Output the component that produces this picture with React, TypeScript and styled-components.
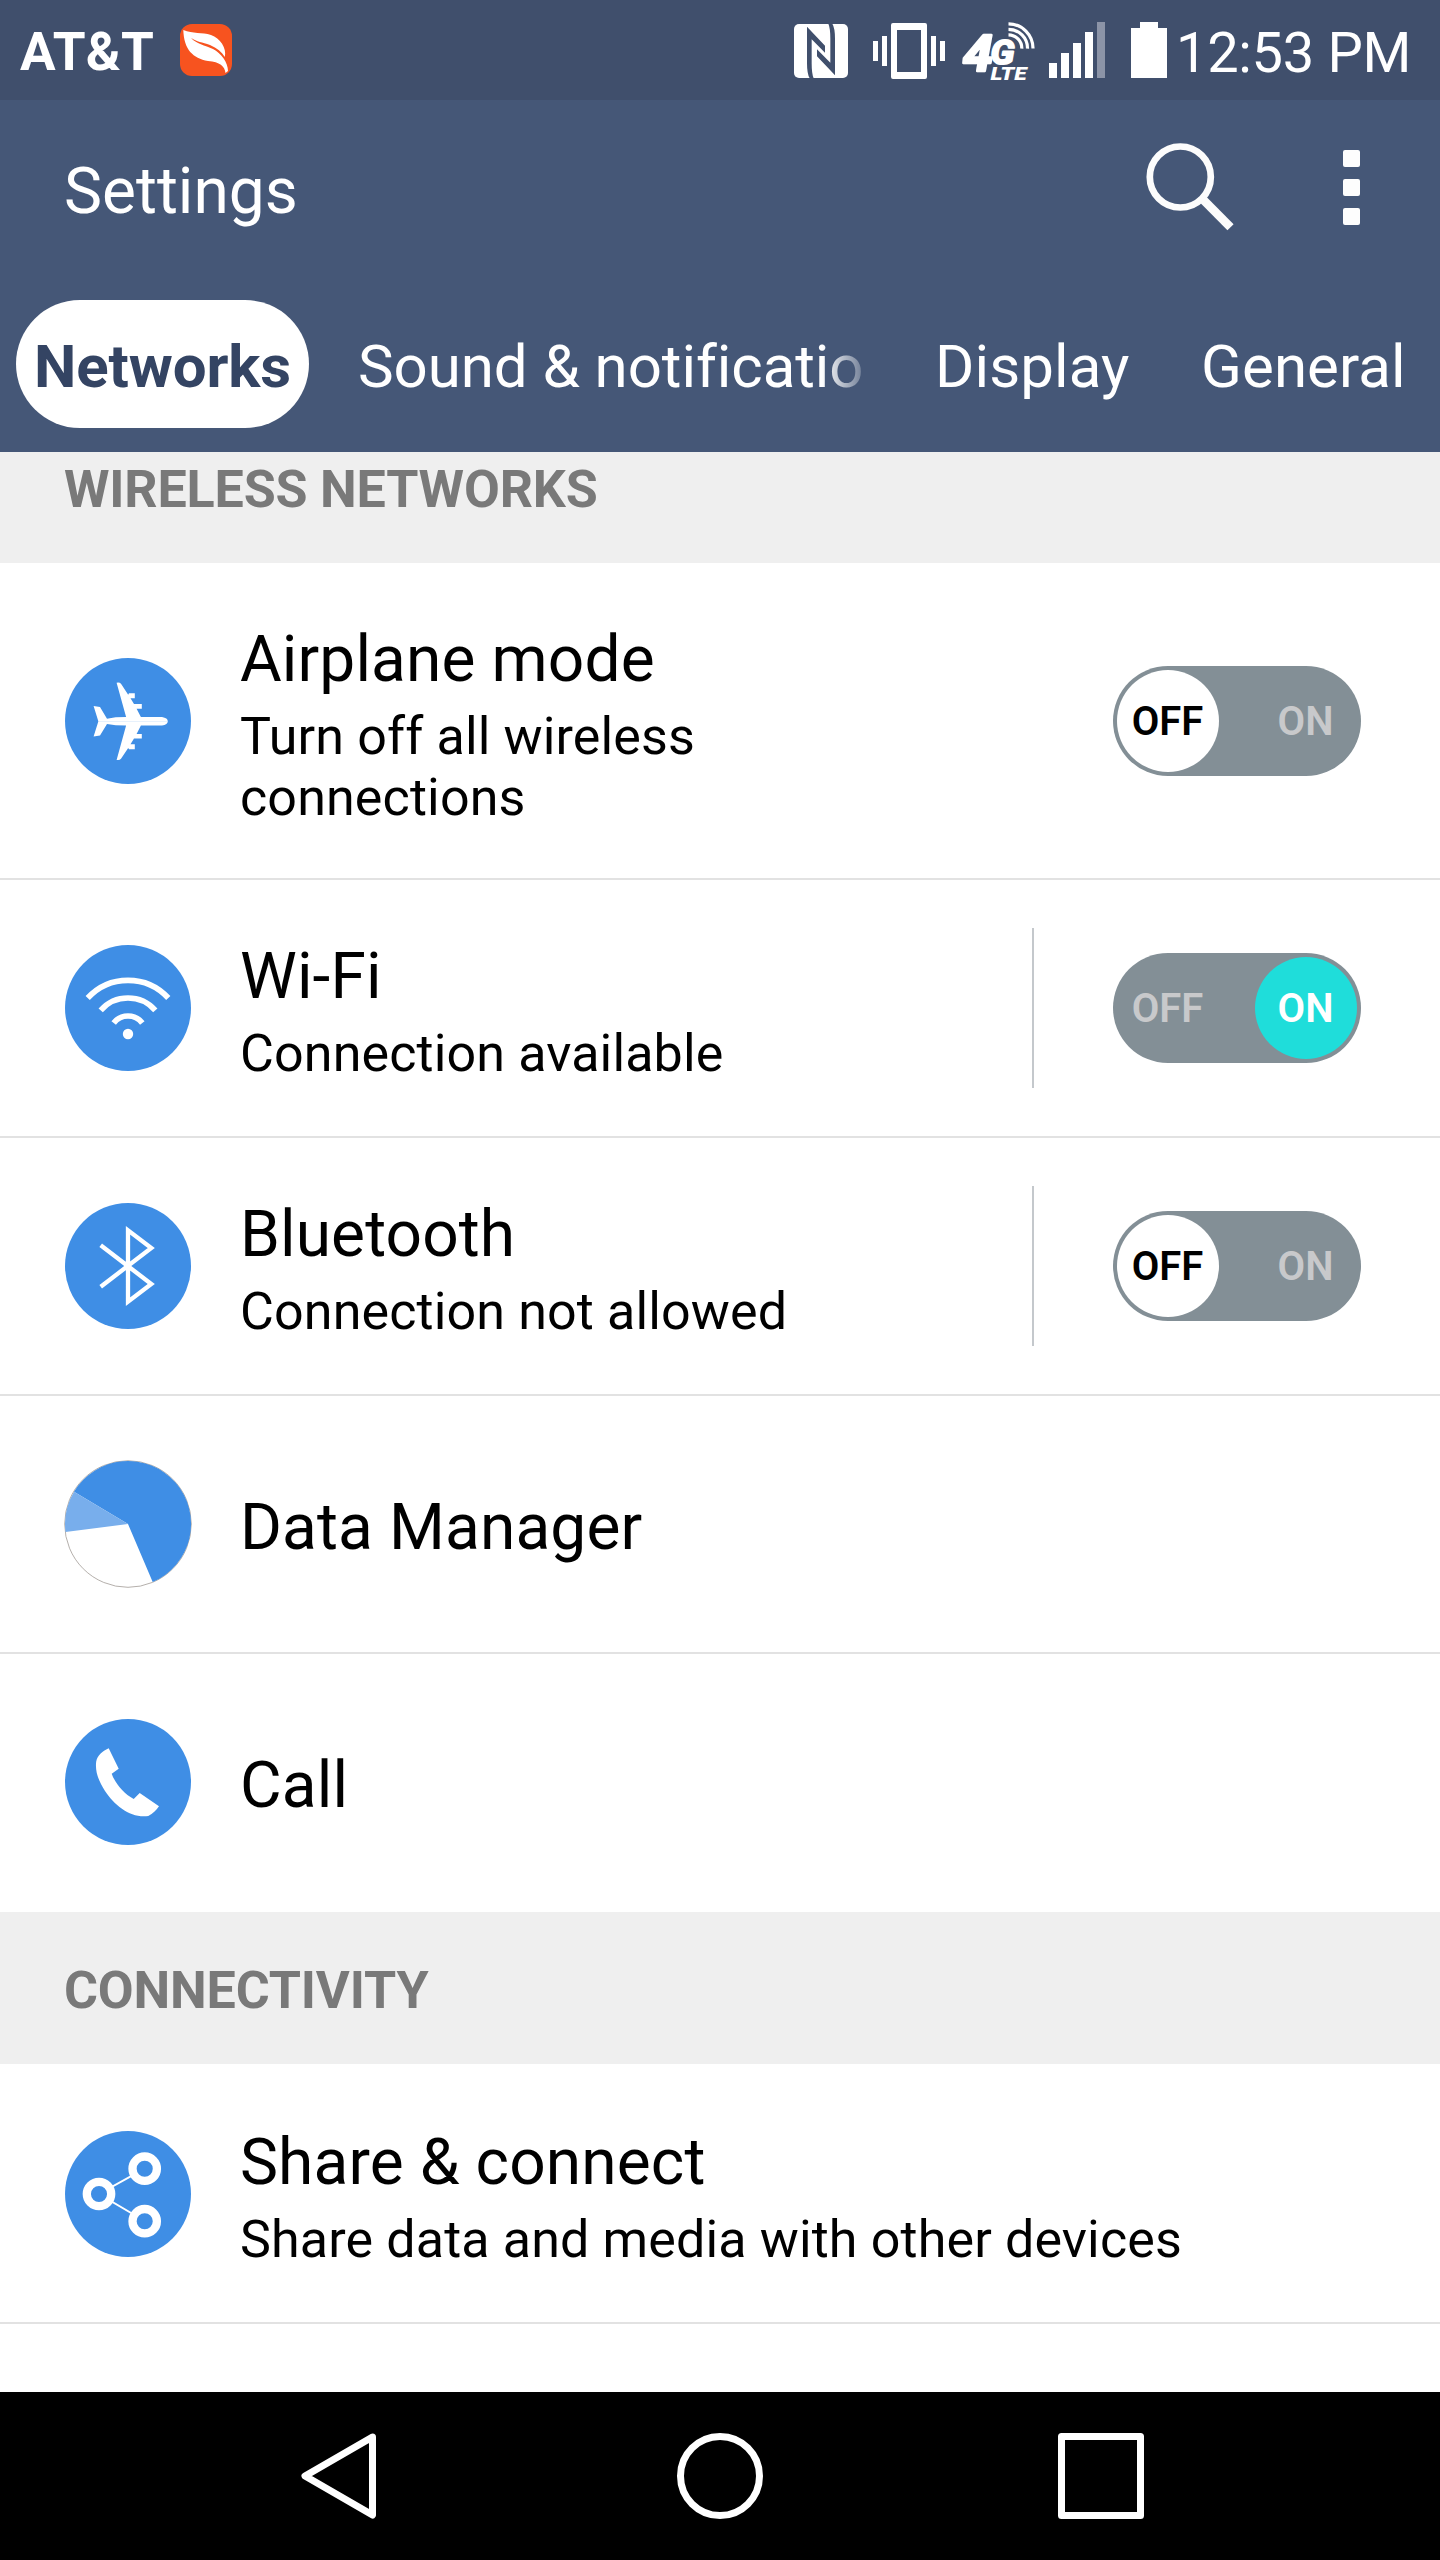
import React from "react";
import styled, { createGlobalStyle } from "styled-components";

const GlobalStyle = createGlobalStyle`
  * { box-sizing: border-box; }
  html, body { margin: 0; padding: 0; background: #fff; }
  body { font-family: Roboto, "Liberation Sans", sans-serif; }
  svg { display: block; flex: none; overflow: visible; }
`;

const Screen = styled.div`
  display: flex;
  flex-direction: column;
  width: 1440px;
  height: 2560px;
  overflow: hidden;
  background: #fff;
  color: #000;
`;

const StatusBar = styled.header`
  display: flex;
  justify-content: space-between;
  height: 100px;
  flex: none;
  background: #404f6c;
  color: #fff;
`;

const StatusLeft = styled.div`
  display: flex;
  align-items: center;
  padding-left: 20px;
`;

const Carrier = styled.span`
  width: 160px;
  font-size: 53px;
  line-height: 62px;
  font-weight: 700;
  letter-spacing: 0.3px;
  margin-top: 3px;
  white-space: nowrap;
`;

const StatusRight = styled.div`
  display: flex;
  align-items: flex-start;
  padding-top: 20px;
`;

const StatusIcon = styled.div<{ $after: number }>`
  margin-right: ${(p) => p.$after}px;
`;

const Clock = styled.span`
  width: 264px;
  font-size: 56px;
  line-height: 66px;
  letter-spacing: -0.3px;
  white-space: nowrap;
`;

const AppHeader = styled.div`
  display: flex;
  flex-direction: column;
  flex: none;
  height: 352px;
  background: #455777;
  color: #fff;
`;

const Toolbar = styled.div`
  display: flex;
  justify-content: space-between;
  align-items: center;
  height: 182px;
  padding: 0 80px 0 64px;
`;

const Title = styled.h1`
  margin: 0;
  font-size: 64px;
  line-height: 75px;
  font-weight: 400;
`;

const Actions = styled.div`
  display: flex;
  align-items: center;
  gap: 109px;
  padding-bottom: 9px;
`;

const MenuDots = styled.div`
  display: grid;
  gap: 12px;
  padding-top: 2px;
`;

const Dot = styled.i`
  display: block;
  width: 17px;
  height: 17px;
  border-radius: 2px;
  background: #fdfdfd;
`;

const Tabs = styled.nav`
  display: flex;
  align-items: center;
  height: 164px;
  padding-left: 16px;
  font-size: 60px;
  line-height: 128px;
  white-space: nowrap;
`;

const ActiveTab = styled.div`
  width: 293px;
  height: 128px;
  border-radius: 64px;
  background: #fff;
  color: #344463;
  font-weight: 700;
  letter-spacing: -0.1px;
  text-align: center;
  padding-top: 3px;
`;

const Tab = styled.div<{ $width: number; $before: number; $fade?: boolean }>`
  width: ${(p) => p.$width}px;
  height: 128px;
  margin-left: ${(p) => p.$before}px;
  padding-top: 3px;
  letter-spacing: ${(p) => (p.$fade ? "-0.05px" : "0.1px")};
  overflow: hidden;
  ${(p) => p.$fade && "mask-image: linear-gradient(to right, #000 calc(100% - 40px), transparent calc(100% + 14px));"}
`;

const Content = styled.main`
  flex: 1;
  overflow: hidden;
`;

const SectionHeader = styled.h2<{ $height: number; $top: number }>`
  height: ${(p) => p.$height}px;
  margin: 0;
  padding: ${(p) => p.$top}px 0 0 64px;
  background: #efefef;
  color: #797979;
  font-size: 52px;
  line-height: 61px;
  font-weight: 700;
  letter-spacing: -0.17px;
`;

const Row = styled.div<{ $height: number; $last?: boolean; $inset: number }>`
  display: flex;
  align-items: center;
  height: ${(p) => p.$height}px;
  padding: ${(p) => p.$inset}px 79px 0 64px;
  border-bottom: 2px solid ${(p) => (p.$last ? "#fff" : "#e2e2e2")};
`;

const RowIcon = styled.div`
  width: 128px;
  height: 128px;
  margin-right: 48px;
  flex: none;
`;

const RowText = styled.div`
  flex: 1;
  min-width: 0;
  padding-top: 7px;
`;

const RowTitle = styled.div`
  font-size: 64px;
  line-height: 75px;
  letter-spacing: 0.12px;
  white-space: nowrap;
`;

const RowNote = styled.div<{ $width?: number }>`
  margin-top: 9px;
  font-size: 52px;
  line-height: 61px;
  letter-spacing: 0.14px;
  max-width: ${(p) => (p.$width ? p.$width + "px" : "none")};
`;

const Divider = styled.div`
  width: 2px;
  height: 160px;
  margin-right: 79px;
  background: #c4c8cc;
`;

const Switch = styled.div`
  display: flex;
  justify-content: space-between;
  width: 248px;
  height: 110px;
  padding: 4px;
  border-radius: 55px;
  background: #838f96;
`;

const Knob = styled.span<{ $bg: string; $color: string }>`
  width: 102px;
  height: 102px;
  padding-right: 1px;
  border-radius: 51px;
  background: ${(p) => p.$bg};
  color: ${(p) => p.$color};
  font-size: 40px;
  line-height: 104px;
  font-weight: 600;
  text-align: center;
`;

const NavBar = styled.footer`
  display: flex;
  align-items: center;
  justify-content: space-between;
  flex: none;
  height: 168px;
  padding: 0 295px 0 300px;
  background: #000;
`;

const HomeButton = styled.div`
  margin-left: 5px;
`;

const BLUE = "#3f8ee5";

function LeafBadge() {
  return (
    <svg width="52" height="52" viewBox="0 0 52 52">
      <rect width="52" height="52" rx="12" fill="#f7531f" />
      <path
        fill="#fff"
        d="M3.3 6C13 10 22 8 31 11C40 14 47 24 44.8 33C42 28 37 24 30 21C22 18 17 18 11 13.7C16 20 25 21 33 25C41 29.5 48 38 48 47L45.5 49C44.5 42 40 38 28 37C13 34 4 26 3.3 6Z"
      />
    </svg>
  );
}

function NfcIcon() {
  return (
    <svg width="54" height="60" viewBox="27 30 162 180">
      <rect x="27" y="42" width="162" height="162" rx="15" fill="#fff" />
      <g fill="#404f6c">
        <path d="M66 50L120 107V128L80 88V160Q80 192 86 205H74Q66 192 66 160Z" />
        <path d="M150 196L96 139V118L136 158V86Q136 54 130 41H142Q150 54 150 86Z" />
      </g>
    </svg>
  );
}

function VibrateIcon() {
  return (
    <svg width="72" height="60" viewBox="873 20 72 60" fill="#fff">
      <path d="M873 41h5v20h-5zM882 36h5v30h-5zM931 36h5v30h-5zM940 41h5v20h-5z" />
      <path fillRule="evenodd" d="M893 23h32a2 2 0 0 1 2 2v52a2 2 0 0 1-2 2h-32a2 2 0 0 1-2-2V25a2 2 0 0 1 2-2zM897 30v42h24V30z" />
    </svg>
  );
}

function LteIcon() {
  return (
    <svg width="76" height="62" viewBox="961 19 76 62" fontFamily="Roboto, sans-serif" fontWeight="900" fontStyle="italic" fill="#fff">
      <g fill="none" stroke="#fff" strokeWidth="3.2">
        <path d="M1008.500 22.800A24.600 24.600 0 0 1 1033 47.600" />
        <path d="M1008.500 28.300A19 19 0 0 1 1027.500 47.600" />
        <path d="M1008.500 33.800A13.500 13.500 0 0 1 1021.800 47.600" />
      </g>
      <text x="963" y="69.500" fontSize="50" fontWeight="700" textLength="30" lengthAdjust="spacingAndGlyphs" stroke="#fff" strokeWidth="2.500" strokeLinejoin="round">4</text>
      <text x="990.500" y="62.500" fontSize="34" fontWeight="700" textLength="24" lengthAdjust="spacingAndGlyphs" stroke="#fff" strokeWidth="2" strokeLinejoin="round">G</text>
      <text x="990.500" y="79" fontSize="18.500" textLength="36" lengthAdjust="spacingAndGlyphs">LTE</text>
    </svg>
  );
}

function SignalIcon() {
  return (
    <svg width="56" height="60" viewBox="0 0 56 60">
      <path d="M0 43h8v15H0zM12 33h8v25h-8zM24 23h8v35h-8zM36 12h8v46h-8z" fill="#fff" />
      <path d="M48 2h8v56h-8z" fill="#8c94a7" />
    </svg>
  );
}

function BatteryIcon() {
  return (
    <svg width="36" height="60" viewBox="0 0 36 60">
      <path d="M9 2h18v6h9v50H0V8h9z" fill="#fff" />
    </svg>
  );
}

function SearchIcon() {
  return (
    <svg width="88" height="88" viewBox="1146 142 88 88" fill="none" stroke="#fcfcfc">
      <circle cx="1180.300" cy="176" r="30.500" strokeWidth="6.700" />
      <path d="M1202.500 198L1230.500 226.300" strokeWidth="8.700" />
    </svg>
  );
}

function RoundIcon({ children }: { children: React.ReactNode }) {
  return (
    <svg width="128" height="128" viewBox="-1 -1 128 128">
      <circle cx="63" cy="63" r="63" fill={BLUE} />
      {children}
    </svg>
  );
}

const HALF_PLANE =
  "M33.400 63.400L28.600 48L35 49L42 60.700L50.700 59.300L61.100 59L51.600 24.700Q54.500 24 56 25.800L63.200 36.700L64 35.300H69.800V40.300H65.500L69 46H76.800V50.700H71.600L75.900 59H97Q102.800 60 102.800 63.400Z";

function AirplaneIcon() {
  return (
    <RoundIcon>
      <path fill="#fff" d={HALF_PLANE} />
      <path fill="#fff" d={HALF_PLANE} transform="matrix(1 0 0 -1 0 126.600)" />
    </RoundIcon>
  );
}

function WifiIcon() {
  return (
    <RoundIcon>
      <g fill="none" stroke="#fff" strokeWidth="5.700">
        <path d="M22.700 53A54.700 54.700 0 0 1 103.300 53" />
        <path d="M35.700 65.300A36.400 36.400 0 0 1 90.300 65.300" />
        <path d="M48.700 78A18.100 18.100 0 0 1 77.300 78" />
      </g>
      <circle cx="63" cy="89" r="5.200" fill="#fff" />
    </RoundIcon>
  );
}

function BluetoothIcon() {
  return (
    <RoundIcon>
      <path d="M35.700 42.300L86.300 81L63 98.700V27.300L86.300 45L35.700 83.700" fill="none" stroke="#fff" strokeWidth="4.300" />
    </RoundIcon>
  );
}

function DataIcon() {
  return (
    <svg width="128" height="128" viewBox="-64 -64 128 128">
      <circle r="63.300" fill="#fff" stroke="#b5b0ac" strokeWidth="1" />
      <path d="M0 0L24.700 58A63 63 0 1 0 -54 -32.300Z" fill={BLUE} />
      <path d="M0 0L-54 -32.300A63 63 0 0 0 -62.500 8Z" fill="#78aeec" />
    </svg>
  );
}

function CallIcon() {
  return (
    <RoundIcon>
      <path
        fill="#fff"
        d="M43.700 29.300L53.700 49.700L46.700 54.700C50 64 58.500 74.500 68.700 80L74.700 74L94 87.300C91 91.500 88 94.500 83.300 97C66 99.500 50 87 40 72C33 61 30 52 31.200 42.500C32.500 36.500 37 32.500 43.700 29.300Z"
      />
    </RoundIcon>
  );
}

function ShareIcon() {
  return (
    <RoundIcon>
      <path d="M79.700 37.700L34 63L79.700 90" fill="none" stroke="#fff" strokeWidth="2" />
      <g fill={BLUE} stroke="#fff" strokeWidth="8.300">
        <circle cx="34" cy="63" r="12.200" />
        <circle cx="79.700" cy="37.700" r="12.200" />
        <circle cx="79.700" cy="90.200" r="12.200" />
      </g>
    </RoundIcon>
  );
}

function Toggle({ on }: { on?: boolean }) {
  return (
    <Switch role="switch" aria-checked={!!on}>
      <Knob $bg={on ? "transparent" : "#fff"} $color={on ? "#c8c9cb" : "#000"}>OFF</Knob>
      <Knob $bg={on ? "#1fddda" : "transparent"} $color={on ? "#fff" : "#c8c9cb"}>ON</Knob>
    </Switch>
  );
}

type SettingProps = {
  icon: React.ReactNode;
  title: string;
  note?: string;
  noteWidth?: number;
  toggle?: "on" | "off";
  divided?: boolean;
  height?: number;
  last?: boolean;
  inset?: number;
};

function Setting({ icon, title, note, noteWidth, toggle, divided, height = 258, last, inset = 0 }: SettingProps) {
  return (
    <Row $height={height} $last={last} $inset={inset}>
      <RowIcon>{icon}</RowIcon>
      <RowText>
        <RowTitle>{title}</RowTitle>
        {note && <RowNote $width={noteWidth}>{note}</RowNote>}
      </RowText>
      {divided && <Divider />}
      {toggle && <Toggle on={toggle === "on"} />}
    </Row>
  );
}

export default function App() {
  return (
    <>
      <GlobalStyle />
      <Screen>
        <StatusBar>
          <StatusLeft>
            <Carrier>AT&amp;T</Carrier>
            <LeafBadge />
          </StatusLeft>
          <StatusRight>
            <StatusIcon $after={25}><NfcIcon /></StatusIcon>
            <StatusIcon $after={16}><VibrateIcon /></StatusIcon>
            <StatusIcon $after={12}><LteIcon /></StatusIcon>
            <StatusIcon $after={26}><SignalIcon /></StatusIcon>
            <StatusIcon $after={9}><BatteryIcon /></StatusIcon>
            <Clock>12:53 PM</Clock>
          </StatusRight>
        </StatusBar>
        <AppHeader>
          <Toolbar>
            <Title>Settings</Title>
            <Actions>
              <SearchIcon />
              <MenuDots>
                <Dot />
                <Dot />
                <Dot />
              </MenuDots>
            </Actions>
          </Toolbar>
          <Tabs>
            <ActiveTab>Networks</ActiveTab>
            <Tab $before={49} $width={504} $fade>Sound &amp; notification</Tab>
            <Tab $before={73} $width={210}>Display</Tab>
            <Tab $before={56} $width={230}>General</Tab>
          </Tabs>
        </AppHeader>
        <Content>
          <SectionHeader $height={111} $top={7}>WIRELESS NETWORKS</SectionHeader>
          <Setting icon={<AirplaneIcon />} title="Airplane mode" note="Turn off all wireless connections" noteWidth={600} toggle="off" height={317} inset={1} />
          <Setting icon={<WifiIcon />} title="Wi-Fi" note="Connection available" toggle="on" divided />
          <Setting icon={<BluetoothIcon />} title="Bluetooth" note="Connection not allowed" toggle="off" divided />
          <Setting icon={<DataIcon />} title="Data Manager" />
          <Setting icon={<CallIcon />} title="Call" last />
          <SectionHeader $height={152} $top={48}>CONNECTIVITY</SectionHeader>
          <Setting icon={<ShareIcon />} title="Share &amp; connect" note="Share data and media with other devices" height={260} inset={2} />
        </Content>
        <NavBar>
          <svg width="78" height="90" viewBox="300 2431 78 90" fill="none" stroke="#fff" strokeWidth="7" strokeLinejoin="round">
            <path d="M372.500 2437L305 2476L372.500 2515Z" />
          </svg>
          <HomeButton>
            <svg width="88" height="88" viewBox="-44 -44 88 88">
              <circle r="39.500" fill="none" stroke="#fff" strokeWidth="7" />
            </svg>
          </HomeButton>
          <svg width="88" height="88" viewBox="-44 -44 88 88">
            <rect x="-39.500" y="-39.500" width="79" height="79" fill="none" stroke="#fff" strokeWidth="7" strokeLinejoin="round" />
          </svg>
        </NavBar>
      </Screen>
    </>
  );
}
